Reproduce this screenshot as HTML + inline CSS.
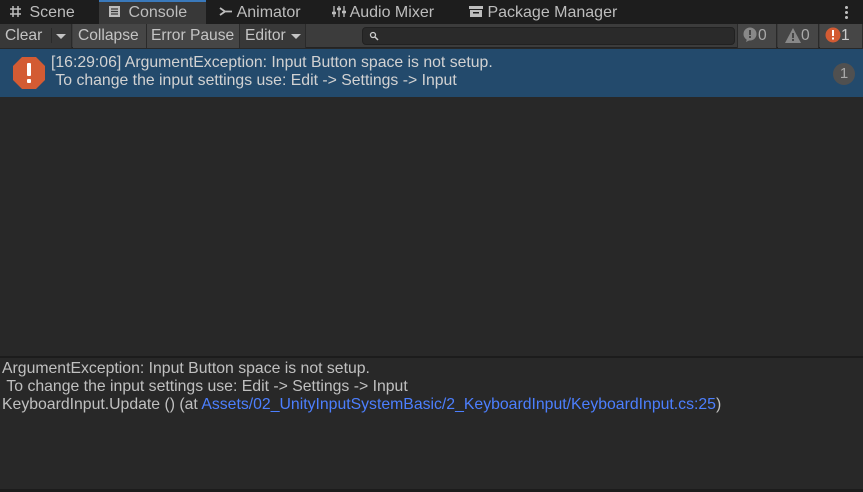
<!DOCTYPE html>
<html><head><style>
*{margin:0;padding:0;box-sizing:border-box}
body{width:863px;height:492px;background:#282828;font-family:"Liberation Sans",sans-serif;color:#c4c4c4;font-size:14px;position:relative;overflow:hidden}
.abs{position:absolute;white-space:nowrap}
#tabs{left:0;top:0;width:863px;height:24px;background:#1d1d1d}
.tab{top:0;height:24px;line-height:25px;font-size:16px;color:#bdbdbd}
#tb{left:0;top:24px;width:863px;height:24px;background:#3c3c3c;border-bottom:1px solid #232323}
.btn{top:24px;height:24px;line-height:24px;font-size:15.6px;color:#c4c4c4;background:#383838;border-right:1px solid #2a2a2a;padding-left:5px}
</style></head><body>
<div class="abs" id="tabs"></div>
<div class="abs" style="left:99px;top:0;width:107px;height:24px;background:#383838;border-top:2px solid #3a79bb"></div>
<div class="abs tab" style="left:9px">
<svg width="13" height="13" style="vertical-align:-1px;margin-right:3px" viewBox="0 0 13 13"><path d="M4 1v11M9 1v11M1 4h11M1 9h11" stroke="#bdbdbd" stroke-width="1.5"/></svg> Scene</div>
<div class="abs tab" style="left:108px"><svg width="13" height="13" style="vertical-align:-1px;margin-right:3px" viewBox="0 0 13 13"><rect x="1" y="1" width="11" height="11" fill="#bdbdbd"/><path d="M3 4h7M3 6.5h7M3 9h7" stroke="#383838" stroke-width="1.2"/></svg> Console</div>
<div class="abs tab" style="left:219px"><svg width="14" height="13" style="vertical-align:-1px" viewBox="0 0 14 13"><path d="M1 3l5 3.5L1 10M5 6.5h8" stroke="#bdbdbd" stroke-width="1.8" fill="none"/></svg> Animator</div>
<div class="abs tab" style="left:332px"><svg width="14" height="13" style="vertical-align:-1px" viewBox="0 0 14 13"><path d="M2 1v11M7 1v11M12 1v11" stroke="#bdbdbd" stroke-width="1.3"/><path d="M0 8h4M5 4h4M10 7h4" stroke="#bdbdbd" stroke-width="2.5"/></svg> Audio Mixer</div>
<div class="abs tab" style="left:469px"><svg width="14" height="13" style="vertical-align:-1px" viewBox="0 0 14 13"><rect x="0" y="1" width="14" height="3" fill="#bdbdbd"/><rect x="1" y="5" width="12" height="7" fill="#bdbdbd"/><rect x="4" y="7" width="6" height="1.5" fill="#1d1d1d"/></svg> Package Manager</div>
<div class="abs" style="left:845px;top:5px;width:3px;height:14px;background:radial-gradient(circle,#bdbdbd 1.4px,transparent 1.6px) 0 0/3px 5px"></div>
<div class="abs" id="tb"></div>
<div class="abs btn" style="left:0;width:72px">Clear<span style="position:absolute;left:51px;top:4px;width:1px;height:15px;background:#2a2a2a"></span><span style="position:absolute;left:56px;top:10px;border:5px solid transparent;border-top:5px solid #c4c4c4;border-bottom:0"></span></div>
<div class="abs btn" style="left:73px;width:74px;background:#464646">Collapse</div>
<div class="abs btn" style="left:147px;width:93px;background:#464646;padding-left:4px">Error Pause</div>
<div class="abs btn" style="left:240px;width:66px">Editor<span style="position:absolute;left:51px;top:10px;border:5px solid transparent;border-top:5px solid #c4c4c4;border-bottom:0"></span></div>
<div class="abs" style="left:362px;top:27px;width:373px;height:18px;background:#2a2a2a;border:1px solid #212121;border-radius:4px"><svg width="10" height="10" style="position:absolute;left:6px;top:3px" viewBox="0 0 10 10"><circle cx="4" cy="4" r="2.5" stroke="#ccc" stroke-width="1.3" fill="none"/><path d="M6 6l3 3" stroke="#ccc" stroke-width="1.5"/></svg></div>
<div class="abs btn" style="left:737px;width:40px;border-left:1px solid #2a2a2a;background:#464646;color:#aaa;padding-left:4px"><svg width="16" height="16" style="vertical-align:-3px" viewBox="0 0 16 16"><circle cx="8" cy="7" r="6.5" fill="#888"/><path d="M5 12l-1 3 4-2z" fill="#888"/><rect x="7" y="3" width="2" height="5" fill="#464646"/><rect x="7" y="9" width="2" height="2" fill="#464646"/></svg>0</div>
<div class="abs btn" style="left:778px;width:41px;background:#464646;color:#aaa;padding-left:7px"><svg width="16" height="15" style="vertical-align:-3px" viewBox="0 0 16 15"><path d="M8 0L16 15H0z" fill="#888"/><rect x="7" y="5" width="2" height="5" fill="#464646"/><rect x="7" y="11" width="2" height="2" fill="#464646"/></svg>0</div>
<div class="abs btn" style="left:820px;width:43px;background:#464646;color:#ccc;padding-left:5px"><svg width="16" height="16" style="vertical-align:-3px" viewBox="0 0 16 16"><circle cx="8" cy="8" r="7.5" fill="#d35b33"/><rect x="7" y="3" width="2" height="6" fill="#fff"/><rect x="7" y="10.5" width="2" height="2" fill="#fff"/></svg>1</div>
<div class="abs" style="left:0;top:49px;width:863px;height:48px;background:#234a6c"></div>
<svg class="abs" style="left:12px;top:56px" width="34" height="34" viewBox="0 0 34 34"><polygon points="10,1 24,1 33,10 33,24 24,33 10,33 1,24 1,10" fill="#d35b33"/><rect x="15" y="7" width="4" height="13" rx="1" fill="#fff"/><rect x="15" y="23" width="4" height="4" rx="1" fill="#fff"/></svg>
<div class="abs" style="left:51px;top:54px;font-size:15.8px;line-height:18px;color:#d2d2d2">[16:29:06] ArgumentException: Input Button space is not setup.<br>&nbsp;To change the input settings use: Edit -&gt; Settings -&gt; Input</div>
<div class="abs" style="left:833px;top:63px;width:22px;height:22px;border-radius:11px;background:#505050;color:#aaa;text-align:center;line-height:22px;font-size:15px">1</div>
<div class="abs" style="left:0;top:356px;width:863px;height:2px;background:#1c1c1c"></div>
<div class="abs" style="left:2px;top:360px;font-size:15.8px;line-height:18px;color:#c0c0c0">ArgumentException: Input Button space is not setup.<br>&nbsp;To change the input settings use: Edit -&gt; Settings -&gt; Input<br>KeyboardInput.Update () (at <span style="color:#4c7fff">Assets/02_UnityInputSystemBasic/2_KeyboardInput/KeyboardInput.cs:25</span>)</div>
<div class="abs" style="left:0;top:489px;width:863px;height:3px;background:#1c1c1c"></div>
</body></html>
